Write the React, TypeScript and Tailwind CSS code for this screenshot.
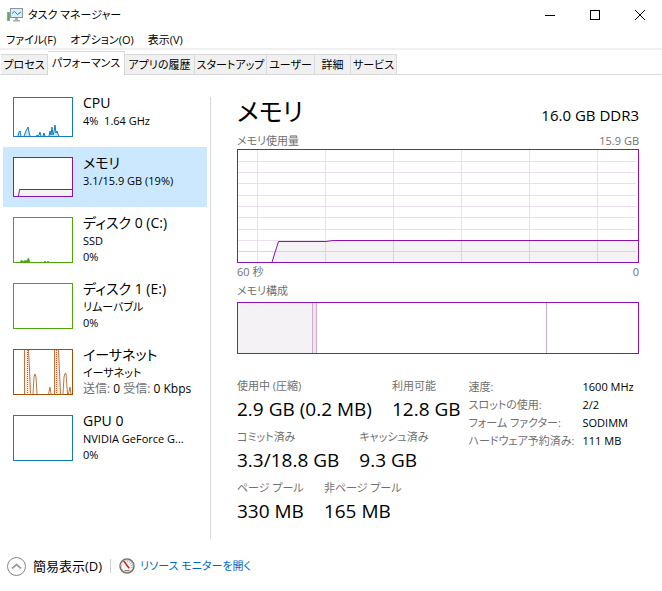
import { useState } from "react";
import type { ReactNode } from "react";
import clsx from "clsx";

const TABS = [
  { label: "プロセス", width: "w-[47px]" },
  { label: "パフォーマンス", width: "w-[77px]" },
  { label: "アプリの履歴", width: "w-[70px]" },
  { label: "スタートアップ", width: "w-[72px]" },
  { label: "ユーザー", width: "w-12" },
  { label: "詳細", width: "w-9" },
  { label: "サービス", width: "w-[46px]" },
];

const MENU = ["ファイル(F)", "オプション(O)", "表示(V)"];

const STATS = [
  [
    { label: "使用中 (圧縮)", value: "2.9 GB (0.2 MB)" },
    { label: "利用可能", value: "12.8 GB" },
  ],
  [
    { label: "コミット済み", value: "3.3/18.8 GB" },
    { label: "キャッシュ済み", value: "9.3 GB" },
  ],
  [
    { label: "ページ プール", value: "330 MB" },
    { label: "非ページ プール", value: "165 MB" },
  ],
];

const HARDWARE = [
  { label: "速度:", value: "1600 MHz" },
  { label: "スロットの使用:", value: "2/2" },
  { label: "フォーム ファクター:", value: "SODIMM" },
  { label: "ハードウェア予約済み:", value: "111 MB" },
];

type Device = {
  id: string;
  title: string;
  lines: ReactNode[];
  frame: string;
  chart?: ReactNode;
};

const DEVICES: Device[] = [
  {
    id: "cpu",
    title: "CPU",
    lines: [<>4%&nbsp; 1.64 GHz</>],
    frame: "h-10 border-[#117dbb]",
    chart: (
      <svg viewBox="0 0 58 38" preserveAspectRatio="none" className="block h-full w-full">
        <path
          d="M4 38L5 34L6 33L7 38M10 38L12 33L13 31L14 29L15 34L16 38M22 38L25 37L26 34L27 38M29 38L30 35L31 38M35 38L36 33L37 37L38 29L39 37L40 34L41 27L42 35L43 33L44 36L45 38"
          fill="#cfe5f1"
          stroke="#117dbb"
        />
      </svg>
    ),
  },
  {
    id: "memory",
    title: "メモリ",
    lines: ["3.1/15.9 GB (19%)"],
    frame: "h-10 border-[#8b12ae]",
    chart: (
      <svg viewBox="0 0 58 38" preserveAspectRatio="none" className="block h-full w-full">
        <path d="M4.500 38L5.500 31.500H58V38Z" fill="#f4f2f4" />
        <path d="M4.500 38L5.500 31.500H58" fill="none" stroke="#8b12ae" />
      </svg>
    ),
  },
  {
    id: "disk0",
    title: "ディスク 0 (C:)",
    lines: ["SSD", "0%"],
    frame: "h-[46px] border-[#4da60c]",
    chart: (
      <svg viewBox="0 0 58 44" preserveAspectRatio="none" className="block h-full w-full">
        <path
          d="M6 44L7.500 42L9 43.500L11 42.500L12.500 43L14.500 40L16 44M30 44L31 43L32 44M33 44L34 43L35 44"
          fill="#4da60c"
          stroke="#4da60c"
          strokeWidth=".6"
        />
      </svg>
    ),
  },
  {
    id: "disk1",
    title: "ディスク 1 (E:)",
    lines: ["リムーバブル", "0%"],
    frame: "h-[46px] border-[#4da60c]",
  },
  {
    id: "ethernet",
    title: "イーサネット",
    lines: [
      "イーサネット",
      <span className="text-[12px]">
        <span className="text-[#707070]">送信:</span> 0 <span className="text-[#707070]">受信:</span> 0 Kbps
      </span>,
    ],
    frame: "h-[46px] border-[#a74f01]",
    chart: (
      <svg viewBox="0 0 58 44" preserveAspectRatio="none" className="block h-full w-full">
        <path d="M10.500 44V0H15L17 44ZM40.500 44V0H44.500L47 44Z" fill="#fdeee5" />
        <path
          d="M10.500 44V0M14.500 0L15.500 20L16.500 43.500M19 44L20 27L21 24L22 27L23 44M34.500 44L36 37L37 44M40.500 44V0M44.500 0L45.500 22L46.500 44M49 44L50 27L51 23.500H52L53.500 44M54.500 44L56 37L57 44"
          fill="none"
          stroke="#b97745"
        />
        <path d="M13.500 0V44M42.500 0V44" stroke="#d9531e" strokeDasharray="1 1" />
      </svg>
    ),
  },
  {
    id: "gpu0",
    title: "GPU 0",
    lines: ["NVIDIA GeForce G...", "0%"],
    frame: "h-[46px] border-[#117dbb]",
  },
];

function AppIcon() {
  return (
    <svg width="16" height="16" viewBox="0 0 16 16" aria-hidden="true">
      <rect x="0" y="5" width="3" height="9" fill="#9aa0a4" />
      <rect x="1" y="6" width="1" height="7" fill="#44b649" />
      <rect x="3.500" y="1.500" width="12" height="9" fill="#d7effc" stroke="#8b9499" />
      <path d="M5 6.500L7.500 4.500L10.500 7.500L14 5" fill="none" stroke="#1787b5" />
      <path d="M8 11h3v2h2v1.500H6V13h2z" fill="#a8adb0" />
    </svg>
  );
}

function GaugeIcon() {
  return (
    <svg width="16" height="16" viewBox="0 0 16 16" aria-hidden="true">
      <circle cx="8" cy="8" r="7" fill="#fbf8f5" stroke="#77716d" strokeWidth="1.500" />
      <circle cx="8" cy="8" r="5.800" fill="none" stroke="#d3ccc6" />
      <path d="M8 3.500A4.500 4.500 0 0 1 12 10" fill="none" stroke="#c9766b" strokeDasharray="1 1" />
      <path d="M4 3L5.800 3L10.800 10L9.500 10.800Z" fill="#d01212" />
      <path d="M5.500 12.500h5" stroke="#8a8580" />
    </svg>
  );
}

function UsageChart() {
  const rows = [12, 23, 34, 46, 57, 68, 80, 91, 102];
  const cols = [20, 88, 156, 224, 292, 360];

  return (
    <svg viewBox="0 0 402 114" preserveAspectRatio="none" className="block h-[114px] w-full">
      <path d="M35 113L41.500 92.500H89L96 91.500H401V113Z" fill="#f4f2f4" />
      {rows.map((y) => (
        <path key={y} d={`M1 ${y + 0.5}H399`} stroke={y > 91 ? "#dfd2e3" : "#ecdef0"} />
      ))}
      {cols.map((x) => (
        <g key={x}>
          <path d={`M${x + 0.5} 1V92`} stroke="#ecdef0" />
          <path d={`M${x + 0.5} 92V113`} stroke={x > 35 ? "#dfd2e3" : "#ecdef0"} />
        </g>
      ))}
      <path d="M35 113L41.500 92.500H89L96 91.500H401" fill="none" stroke="#8b12ae" />
      <rect x=".5" y=".5" width="401" height="113" fill="none" stroke="#8b12ae" />
    </svg>
  );
}

function CompositionChart() {
  return (
    <svg viewBox="0 0 402 52" preserveAspectRatio="none" className="block h-[52px] w-full">
      <rect x="1" y="1" width="74" height="50" fill="#f4f2f4" />
      <rect x="75" y="1" width="5" height="50" fill="#efe6f2" />
      <path d="M75.500 1V51M79.500 1V51M309.500 1V51" stroke="#c9acd5" />
      <rect x=".5" y=".5" width="401" height="51" fill="none" stroke="#8b12ae" />
    </svg>
  );
}

export default function App() {
  const [tab, setTab] = useState("パフォーマンス");
  const [device, setDevice] = useState("memory");

  return (
    <div className="flex min-h-screen flex-col bg-white font-['Open_Sans','Noto_Sans_CJK_JP',sans-serif] text-[11px] leading-4 whitespace-nowrap text-black [font-feature-settings:'palt']">
      <header className="border-b-2 border-[#f0f0f0]">
        <div className="flex h-[30px] items-center pl-[7px]">
          <AppIcon />
          <h1 className="ml-[5px] flex-1">タスク マネージャー</h1>
          <button aria-label="最小化" className="flex h-7 w-[45px] items-center justify-center">
            <svg width="10" height="10"><path d="M0 5.500H10" stroke="#000" /></svg>
          </button>
          <button aria-label="最大化" className="flex h-7 w-[45px] items-center justify-center">
            <svg width="10" height="10"><rect x=".5" y=".5" width="9" height="9" fill="none" stroke="#000" /></svg>
          </button>
          <button aria-label="閉じる" className="flex h-7 w-[45px] items-center justify-center">
            <svg width="10" height="10"><path d="M0 0L10 10M10 0L0 10" stroke="#000" /></svg>
          </button>
        </div>
        <nav className="flex h-[18px] items-end gap-[14px] pl-[6px]">
          {MENU.map((item) => (
            <button key={item}>{item}</button>
          ))}
        </nav>
      </header>

      <div role="tablist" className="flex h-[25px] items-end border-b border-[#d9d9d9] pl-px">
        {TABS.map(({ label, width }) => (
          <button
            key={label}
            role="tab"
            aria-selected={tab === label}
            onClick={() => setTab(label)}
            className={clsx(
              "flex shrink-0 justify-center border-t border-r border-[#d9d9d9]",
              width,
              tab === label ? "-mb-px h-6 bg-white pt-[3px]" : "h-5 bg-[#f0f0f0] pt-0.5"
            )}
          >
            {label}
          </button>
        ))}
      </div>

      <main className="flex flex-1 pb-0.5">
        <aside className="w-[207px] shrink-0 pt-3 pl-[3px]">
          {DEVICES.map((d) => (
            <button
              key={d.id}
              onClick={() => setDevice(d.id)}
              className={clsx("flex w-full items-start gap-[10px] px-[10px] text-left", device === d.id && "bg-[#cce8ff]")}
            >
              <span className={clsx("my-[10px] block w-[60px] shrink-0 border bg-white", d.frame)}>{d.chart}</span>
              <span className="block pt-[6px]">
                <span className="block text-[14px] leading-5">{d.title}</span>
                {d.lines.map((line, i) => (
                  <span key={i} className="block">{line}</span>
                ))}
              </span>
            </button>
          ))}
        </aside>

        <section className="mt-[22px] ml-[3px] min-w-0 flex-1 border-l border-[#d9d9d9] pr-[23px] pl-[26px]">
          <div className="flex h-9 items-end justify-between">
            <h2 className="text-[25px] leading-[44px]">メモリ</h2>
            <p className="text-[15px] leading-9">16.0 GB DDR3</p>
          </div>
          <div className="flex justify-between text-[#707070]">
            <span>メモリ使用量</span>
            <span>15.9 GB</span>
          </div>
          <UsageChart />
          <div className="mt-px flex justify-between text-[#707070]">
            <span>60 秒</span>
            <span>0</span>
          </div>
          <p className="mt-[3px] mb-[3px] text-[#707070]">メモリ構成</p>
          <CompositionChart />

          <div className="mt-6 flex items-start gap-2">
            <div className="space-y-[5px]">
              {STATS.map((row, i) => (
                <dl key={i} className="flex gap-5">
                  {row.map((s) => (
                    <div key={s.label}>
                      <dt className="text-[#707070]">{s.label}</dt>
                      <dd className="text-[19px] leading-[30px]">{s.value}</dd>
                    </div>
                  ))}
                </dl>
              ))}
            </div>
            <dl className="grid grid-cols-[114px_auto] leading-[18px]">
              {HARDWARE.map((h) => (
                <div key={h.label} className="contents">
                  <dt className="text-[#707070]">{h.label}</dt>
                  <dd>{h.value}</dd>
                </div>
              ))}
            </dl>
          </div>
        </section>
      </main>

      <footer className="flex h-[50px] items-center pl-[7px]">
        <button className="flex items-center gap-[7px] text-[13px]">
          <svg width="19" height="19" viewBox="0 0 19 19" aria-hidden="true">
            <circle cx="9.500" cy="9.500" r="9" fill="none" stroke="#838383" />
            <path d="M5 11.500L9.500 7.500L14 11.500" fill="none" stroke="#a0a0a0" strokeWidth="1.800" />
          </svg>
          簡易表示(D)
        </button>
        <span className="mx-2 h-[14px] w-px bg-[#d0d0d0]" />
        <a href="#resmon" className="flex items-center gap-[5px] text-[#0066cc]">
          <GaugeIcon />
          リソース モニターを開く
        </a>
      </footer>
    </div>
  );
}
